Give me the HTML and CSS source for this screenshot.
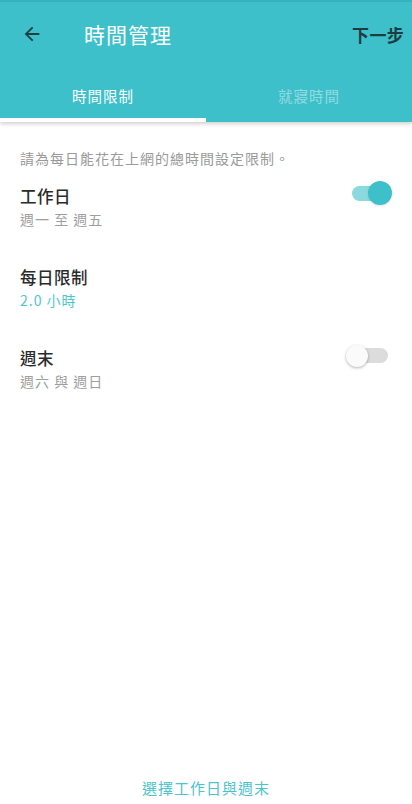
FILE: index.html
```html
<!DOCTYPE html>
<html lang="zh-Hant">
<head>
<meta charset="utf-8">
<title>時間管理</title>
<link rel="stylesheet" href="styles.css">
</head>
<body>
<div class="page">
  <header class="appbar">
    <div class="toolbar">
      <button class="back" aria-label="返回">
        <svg width="22" height="22" viewBox="0 0 24 24"><path d="M20 11H7.83l5.59-5.59L12 4l-8 8 8 8 1.41-1.41L7.83 13H20v-2z" fill="#1f3f44"/></svg>
      </button>
      <h1 class="title">時間管理</h1>
      <span class="next">下一步</span>
    </div>
    <nav class="tabs">
      <div class="tab active">時間限制</div>
      <div class="tab">就寢時間</div>
    </nav>
    <div class="indicator-row"><div class="indicator"></div></div>
  </header>

  <main class="content">
    <p class="desc">請為每日能花在上網的總時間設定限制。</p>

    <div class="item">
      <div class="item-text">
        <div class="item-title">工作日</div>
        <div class="item-sub">週一 至 週五</div>
      </div>
      <div class="switch on"><span class="track"></span><span class="thumb"></span></div>
    </div>

    <div class="item">
      <div class="item-text">
        <div class="item-title">每日限制</div>
        <div class="item-sub accent">2.0 小時</div>
      </div>
    </div>

    <div class="item">
      <div class="item-text">
        <div class="item-title">週末</div>
        <div class="item-sub">週六 與 週日</div>
      </div>
      <div class="switch off"><span class="track"></span><span class="thumb"></span></div>
    </div>
  </main>

  <footer class="footer">選擇工作日與週末</footer>
</div>
</body>
</html>
```

FILE: styles.css
```css
* { box-sizing: border-box; }
html, body { margin: 0; padding: 0; background: #fff; }
body {
  font-family: "Noto Sans CJK TC", "Noto Sans", Roboto, sans-serif;
  color: #333;
}
.page {
  width: 412px;
  height: 804px;
  display: flex;
  flex-direction: column;
}
.appbar {
  background: #3ec0ca;
  border-top: 2px solid #35b3bd;
  box-shadow: 0 2px 4px rgba(0,0,0,0.18);
  position: relative;
  z-index: 1;
}
.toolbar {
  height: 64px;
  display: flex;
  align-items: center;
  padding: 0 8px 0 21px;
}
.back {
  background: none;
  border: 0;
  padding: 0;
  width: 22px;
  height: 22px;
  display: flex;
  align-items: center;
  justify-content: center;
}
.title {
  margin: 0 0 0 41px;
  font-size: 21px;
  font-weight: 400;
  color: #fff;
  letter-spacing: 1px;
  flex: 1;
}
.next {
  font-size: 17px;
  font-weight: 700;
  color: #1e3d40;
  letter-spacing: 0.3px;
}
.tabs {
  display: flex;
  height: 52px;
  padding-top: 6px;
}
.tab {
  flex: 1;
  display: flex;
  align-items: center;
  justify-content: center;
  font-size: 14.5px;
  color: rgba(255,255,255,0.45);
  letter-spacing: 1px;
}
.tab.active { color: #fff; }
.indicator-row { height: 4px; }
.indicator {
  width: 206px;
  height: 4px;
  background: #fff;
}
.content {
  flex: 1;
  padding: 26px 20px 0 20px;
}
.desc {
  margin: 0 0 16px 0;
  font-size: 14px;
  line-height: 20px;
  color: #9a9a9a;
  letter-spacing: 1px;
}
.item {
  display: flex;
  align-items: flex-start;
  justify-content: space-between;
  margin-bottom: 35px;
}
.item-title {
  font-size: 16.5px;
  line-height: 24px;
  font-weight: 500;
  color: #2b2b2b;
  letter-spacing: 0.5px;
}
.item-sub {
  font-size: 14px;
  line-height: 22px;
  color: #9e9e9e;
  letter-spacing: 1px;
}
.item-sub.accent { color: #4cc7d0; }
.switch {
  position: relative;
  width: 48px;
  height: 24px;
  margin-top: -3px;
}
.switch .track {
  position: absolute;
  top: 5px;
  height: 15px;
  border-radius: 8px;
}
.switch .thumb {
  position: absolute;
  border-radius: 50%;
}
.switch.on .track { left: 8px; width: 36px; background: #8ad9df; }
.switch.on .thumb {
  left: 24px; top: 0; width: 24px; height: 24px;
  background: #3ec0ca;
  box-shadow: 0 1px 2px rgba(0,0,0,0.12);
}
.switch.off .track { left: 13px; width: 31px; background: #dcdcdc; }
.switch.off .thumb {
  left: 2px; top: 2px; width: 22px; height: 22px;
  background: #fafafa;
  box-shadow: 0 1px 3px rgba(0,0,0,0.3);
}
.footer {
  height: 34px;
  display: flex;
  align-items: center;
  justify-content: center;
  font-size: 15px;
  color: #4cc3cd;
  letter-spacing: 1px;
}
```
